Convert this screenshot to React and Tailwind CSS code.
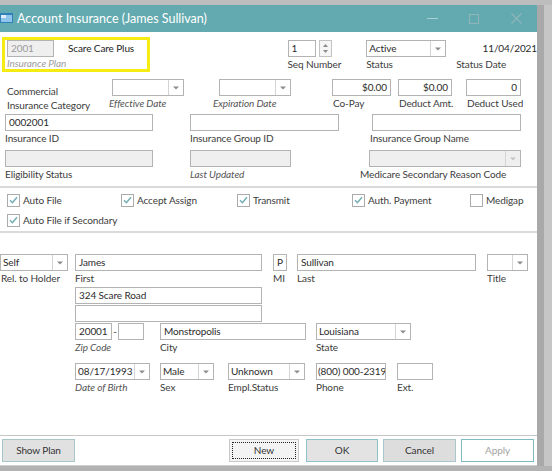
import React from "react";

function Field({ w = "", value = "", gray = false, right = false, muted = false, tight = false }) {
  return (
    <div
      className={`h-[17px] border border-[#b3b3b3] ${tight ? "px-[1px]" : "px-[3px]"} leading-[15px] whitespace-nowrap overflow-hidden ${
        gray ? "bg-[#efefef]" : "bg-white"
      } ${right ? "text-right" : ""} ${muted ? "text-[#9a9a9a]" : "text-[#2b2b2b]"} ${w}`}
    >
      {value}
    </div>
  );
}

function Caret({ light }) {
  return (
    <svg width="6" height="4" viewBox="0 0 6 4">
      <path d="M0 0.5h6L3 3.5z" fill={light ? "#c4c4c4" : "#8c8c8c"} />
    </svg>
  );
}

function Select({ w = "", value = "", gray = false }) {
  return (
    <div className={`flex h-[17px] border border-[#b3b3b3] ${gray ? "bg-[#efefef]" : "bg-white"} ${w}`}>
      <div className="flex-1 px-[2px] leading-[15px] text-[#2b2b2b] whitespace-nowrap overflow-hidden">{value}</div>
      <div className="w-[15px] border-l border-[#d4d4d4] flex items-center justify-center">
        <Caret light={gray} />
      </div>
    </div>
  );
}

function Label({ children, italic = false, className = "" }) {
  return (
    <div
      className={`leading-[14px] whitespace-nowrap ${italic ? "italic text-[#555555]" : "text-[#3c3c3c]"} ${className}`}
    >
      {children}
    </div>
  );
}

function Check({ checked, label }) {
  return (
    <div className="flex items-center gap-[3px] h-[14px]">
      <div className="w-[13px] h-[13px] border border-[#ababab] bg-white flex items-center justify-center">
        {checked && (
          <svg width="9" height="8" viewBox="0 0 9 8">
            <path d="M1 4.3 L3.4 6.7 L8 1.2" stroke="#72afb4" strokeWidth="1.5" fill="none" />
          </svg>
        )}
      </div>
      <span className="text-[#3c3c3c] leading-[14px] whitespace-nowrap">{label}</span>
    </div>
  );
}

function Btn({ w, children, variant }) {
  const styles = {
    plan: "bg-[#e1e1e1] border-[#a7c6c9] text-[#333333]",
    new: "bg-[#f3f3f3] border-[#c9c9c9] text-[#333333]",
    ok: "bg-[#e3e3e3] border-[#8fc2c6] text-[#333333]",
    cancel: "bg-[#dddddd] border-[#a9c7ca] text-[#333333]",
    apply: "bg-white border-[#7fbcc1] text-[#a3a3a3]",
  };
  return (
    <div className={`h-[23px] border flex items-center justify-center ${styles[variant]} ${w}`}>
      {variant === "new" ? (
        <div className="w-[calc(100%-4px)] h-[calc(100%-4px)] border border-dotted border-[#222222] flex items-center justify-center">
          {children}
        </div>
      ) : (
        children
      )}
    </div>
  );
}

export default function App() {
  return (
    <div className="w-[552px] h-[471px] bg-[#b7b7b7] flex flex-col overflow-hidden font-[Lato,'Liberation_Sans',sans-serif] text-[10px] tracking-[-0.1px]">
      <div className="h-[5px] bg-[#bdbdbd] shrink-0" />
      <div className="flex h-[461px] shrink-0">
        <div className="w-[537px] flex flex-col">
          {/* Title bar */}
          <div className="h-[27px] bg-[#62aaaf] flex items-center shrink-0">
            <svg width="14" height="11" viewBox="0 0 14 11" className="ml-[0px]">
              <rect x="0" y="0" width="13" height="10" fill="#2f7fb8" />
              <rect x="1" y="2" width="11" height="7" fill="#8fc4ea" />
              <rect x="1" y="2" width="5" height="3" fill="#ffffff" opacity="0.7" />
            </svg>
            <span className="ml-[3px] text-white text-[12.5px] tracking-normal leading-[27px] whitespace-nowrap">
              Account Insurance (James Sullivan)
            </span>
            <div className="ml-auto flex h-full">
              <div className="w-[42px] flex items-center justify-center">
                <div className="w-[11px] h-[1px] bg-[#a9d0d3]" />
              </div>
              <div className="w-[42px] flex items-center justify-center">
                <div className="w-[10px] h-[10px] border border-[#8fb6b9]" />
              </div>
              <div className="w-[42px] flex items-center justify-center">
                <svg width="11" height="11" viewBox="0 0 11 11">
                  <path d="M0.5 0.5L10.5 10.5M10.5 0.5L0.5 10.5" stroke="#8fb6b9" strokeWidth="1.1" />
                </svg>
              </div>
            </div>
          </div>

          {/* Content */}
          <div className="flex-1 bg-white flex flex-col border-b border-[#cfcfcf]">
            {/* Row A */}
            <div className="flex items-start h-[35px] mt-[5px] shrink-0">
              <div className="ml-[2px] w-[148px] h-[35px] border-[3px] border-[#f4ec12] flex flex-col">
                <div className="flex items-center">
                  <div className="ml-[2px]">
                    <Field w="w-[47px]" value="2001" gray muted />
                  </div>
                  <span className="ml-[14px] text-[#222222] whitespace-nowrap">Scare Care Plus</span>
                </div>
                <div className="ml-[2px] leading-[12px] italic text-[#9d9d9d] whitespace-nowrap">Insurance Plan</div>
              </div>
              <div className="ml-[138px] mt-[3px] flex flex-col">
                <div className="flex">
                  <Field w="w-[28px]" value="1" />
                  <div className="ml-[3px] w-[13px] h-[17px] border border-[#c3c3c3] bg-[#f6f6f6] flex flex-col items-center justify-center gap-[3px]">
                    <svg width="5" height="3" viewBox="0 0 5 3">
                      <path d="M0 3h5L2.5 0z" fill="#8c8c8c" />
                    </svg>
                    <svg width="5" height="3" viewBox="0 0 5 3">
                      <path d="M0 0h5L2.5 3z" fill="#8c8c8c" />
                    </svg>
                  </div>
                </div>
                <Label>Seq Number</Label>
              </div>
              <div className="ml-[25px] mt-[3px] flex flex-col">
                <Select w="w-[80px]" value="Active" />
                <Label>Status</Label>
              </div>
              <div className="ml-[10px] mt-[3px] w-[81px] flex flex-col">
                <div className="leading-[17px] text-right text-[#2b2b2b]">11/04/2021</div>
                <Label>Status Date</Label>
              </div>
            </div>

            {/* Row B */}
            <div className="flex items-start h-[33px] mt-[7px] shrink-0">
              <div className="ml-[7px] w-[102px] pt-[5px] flex flex-col">
                <Label>Commercial</Label>
                <Label>Insurance Category</Label>
              </div>
              <div className="w-[75px] flex flex-col">
                <div className="ml-[3px]">
                  <Select w="w-[72px]" />
                </div>
                <Label italic>Effective Date</Label>
              </div>
              <div className="ml-[29px] w-[78px] flex flex-col">
                <div className="ml-[6px]">
                  <Select w="w-[72px]" />
                </div>
                <Label italic>Expiration Date</Label>
              </div>
              <div className="ml-[41px] w-[59px] flex flex-col">
                <Field w="w-[59px]" value="$0.00" right />
                <Label className="ml-[1px]">Co-Pay</Label>
              </div>
              <div className="ml-[7px] w-[54px] flex flex-col">
                <Field w="w-[54px]" value="$0.00" right />
                <Label className="ml-[1px]">Deduct Amt.</Label>
              </div>
              <div className="ml-[14px] w-[55px] flex flex-col">
                <Field w="w-[55px]" value="0" right />
                <Label className="ml-[1px]">Deduct Used</Label>
              </div>
            </div>

            {/* Row C */}
            <div className="flex items-start h-[31px] mt-[2px] shrink-0">
              <div className="ml-[5px] flex flex-col">
                <Field w="w-[148px]" value="0002001" />
                <Label>Insurance ID</Label>
              </div>
              <div className="ml-[37px] flex flex-col">
                <Field w="w-[149px]" />
                <Label>Insurance Group ID</Label>
              </div>
              <div className="ml-[33px] flex flex-col">
                <Field w="w-[149px]" />
                <Label className="-ml-[2px]">Insurance Group Name</Label>
              </div>
            </div>

            {/* Row D */}
            <div className="flex items-start h-[31px] mt-[5px] shrink-0">
              <div className="ml-[5px] flex flex-col">
                <Field w="w-[148px]" gray />
                <Label>Eligibility Status</Label>
              </div>
              <div className="ml-[37px] flex flex-col">
                <Field w="w-[101px]" gray />
                <Label italic>Last Updated</Label>
              </div>
              <div className="ml-[78px] flex flex-col">
                <Select w="w-[152px]" gray />
                <Label className="-ml-[9px]">Medicare Secondary Reason Code</Label>
              </div>
            </div>

            <div className="h-[2px] bg-[#dadada] mt-[5px] shrink-0" />

            {/* Checkboxes */}
            <div className="flex mt-[5px] ml-[7px] shrink-0">
              <div className="w-[114px]">
                <Check checked label="Auto File" />
              </div>
              <div className="w-[116px]">
                <Check checked label="Accept Assign" />
              </div>
              <div className="w-[115px]">
                <Check checked label="Transmit" />
              </div>
              <div className="w-[118px]">
                <Check checked label="Auth. Payment" />
              </div>
              <div>
                <Check label="Medigap" />
              </div>
            </div>
            <div className="flex mt-[6px] ml-[7px] shrink-0">
              <Check checked label="Auto File if Secondary" />
            </div>

            <div className="h-[2px] bg-[#dadada] mt-[4px] shrink-0" />

            {/* Person row */}
            <div className="flex items-start h-[31px] mt-[21px] shrink-0">
              <div className="flex flex-col">
                <Select w="w-[68px]" value="Self" />
                <Label className="ml-[1px]">Rel. to Holder</Label>
              </div>
              <div className="ml-[7px] flex flex-col">
                <Field w="w-[187px]" value="James" />
                <Label>First</Label>
              </div>
              <div className="ml-[11px] flex flex-col">
                <Field w="w-[14px]" value="P" />
                <Label>MI</Label>
              </div>
              <div className="ml-[10px] flex flex-col">
                <Field w="w-[179px]" value="Sullivan" />
                <Label>Last</Label>
              </div>
              <div className="ml-[11px] flex flex-col">
                <Select w="w-[41px]" />
                <Label>Title</Label>
              </div>
            </div>

            <div className="ml-[75px] mt-[2px] shrink-0">
              <Field w="w-[187px]" value="324 Scare Road" />
            </div>
            <div className="ml-[75px] mt-[1px] shrink-0">
              <Field w="w-[187px]" />
            </div>

            {/* Zip row */}
            <div className="flex items-start h-[31px] mt-[1px] shrink-0">
              <div className="ml-[75px] flex flex-col">
                <div className="flex">
                  <Field w="w-[37px]" value="20001" />
                  <span className="w-[6px] text-center leading-[17px] text-[#444444]">-</span>
                  <Field w="w-[26px]" />
                </div>
                <Label italic>Zip Code</Label>
              </div>
              <div className="ml-[16px] flex flex-col">
                <Field w="w-[146px]" value="Monstropolis" />
                <Label>City</Label>
              </div>
              <div className="ml-[10px] flex flex-col">
                <Select w="w-[95px]" value="Louisiana" />
                <Label>State</Label>
              </div>
            </div>

            {/* DOB row */}
            <div className="flex items-start h-[31px] mt-[9px] shrink-0">
              <div className="ml-[75px] flex flex-col">
                <Select w="w-[75px]" value="08/17/1993" />
                <Label italic>Date of Birth</Label>
              </div>
              <div className="ml-[10px] flex flex-col">
                <Select w="w-[54px]" value="Male" />
                <Label>Sex</Label>
              </div>
              <div className="ml-[14px] flex flex-col">
                <Select w="w-[77px]" value="Unknown" />
                <Label>Empl.Status</Label>
              </div>
              <div className="ml-[11px] flex flex-col">
                <Field w="w-[70px]" value="(800) 000-2319" tight />
                <Label>Phone</Label>
              </div>
              <div className="ml-[11px] flex flex-col">
                <Field w="w-[36px]" />
                <Label>Ext.</Label>
              </div>
            </div>

            {/* Footer */}
            <div className="mt-auto shrink-0">
              <div className="h-[1px] bg-[#c6c6c6]" />
              <div className="flex mt-[3px] mb-[3px]">
                <div className="ml-[2px]">
                  <Btn w="w-[73px]" variant="plan">Show Plan</Btn>
                </div>
                <div className="ml-[154px]">
                  <Btn w="w-[70px]" variant="new">New</Btn>
                </div>
                <div className="ml-[7px]">
                  <Btn w="w-[72px]" variant="ok">OK</Btn>
                </div>
                <div className="ml-[5px]">
                  <Btn w="w-[73px]" variant="cancel">Cancel</Btn>
                </div>
                <div className="ml-[5px]">
                  <Btn w="w-[73px]" variant="apply">Apply</Btn>
                </div>
              </div>
            </div>
          </div>
        </div>
        <div className="w-[7px] bg-[#a9a9a9]" />
        <div className="flex-1 bg-[#c6c6c6]" />
      </div>
      <div className="flex-1 bg-[#b3b3b3]" />
    </div>
  );
}
